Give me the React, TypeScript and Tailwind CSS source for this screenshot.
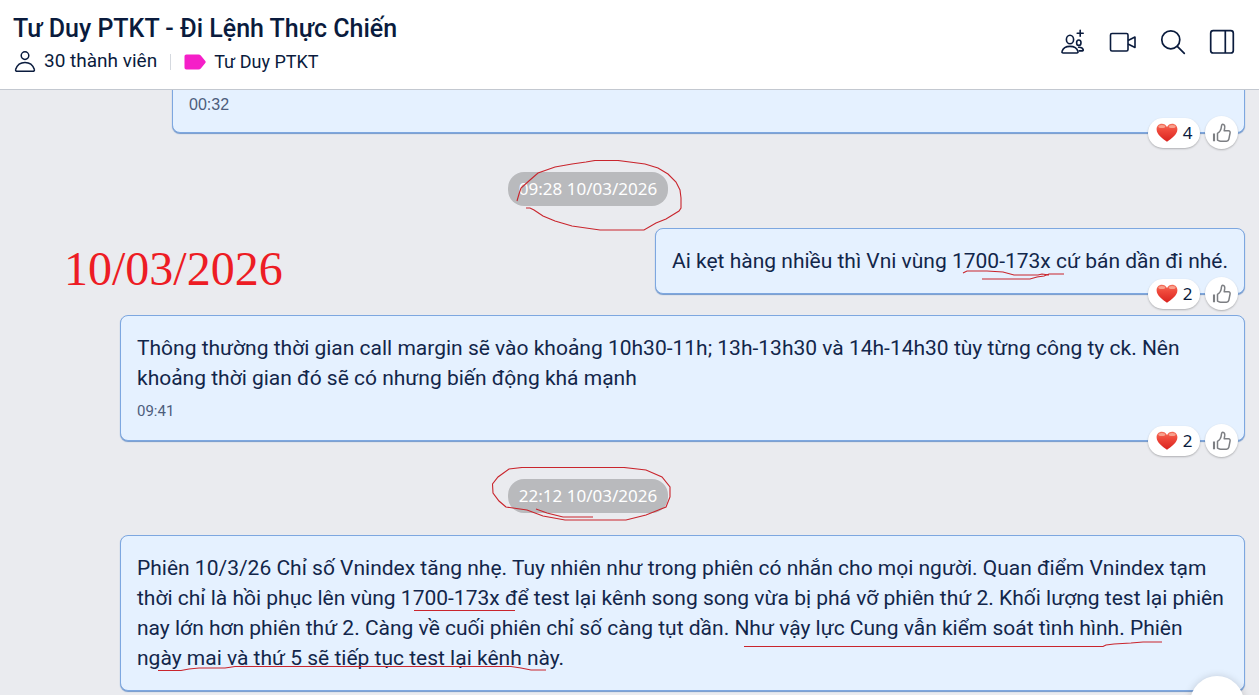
import type { ReactNode } from "react";

function Stroke({ d, className, width, height }: { d: string; className: string; width: number; height: number }) {
  return (
    <svg
      aria-hidden="true"
      className={`pointer-events-none absolute z-10 ${className}`}
      width={width}
      height={height}
      viewBox={`0 0 ${width} ${height}`}
      fill="none"
      stroke="#c9252d"
      strokeWidth="1.1"
    >
      <path d={d} />
    </svg>
  );
}

function MembersIcon() {
  return (
    <svg width="22" height="22" viewBox="0 0 22 22" fill="none" stroke="#0a1b3d" strokeWidth="1.5" aria-hidden="true">
      <circle cx="11" cy="4.600" r="3.800" />
      <path d="M3.2 20.3h15.6c1.3 0 1.9-.9 1.5-2C19 14.300 15.500 11.400 11 11.400S3 14.300 1.700 18.300c-.4 1.100.2 2 1.500 2Z" />
    </svg>
  );
}

function AddMemberIcon() {
  return (
    <svg width="26" height="26" viewBox="0 0 26 26" fill="none" stroke="#0a1b3d" strokeWidth="1.6" strokeLinecap="round" strokeLinejoin="round" aria-hidden="true">
      <ellipse cx="10" cy="10.500" rx="3.600" ry="4.300" />
      <path d="M3.200 24h13.600c1 0 1.500-.7 1.200-1.600-.9-3-4-5-8-5s-7.100 2-8 5c-.3.900.2 1.600 1.200 1.600Z" />
      <path d="M20.200 1.200v6M17.200 4.200h6" />
      <ellipse cx="18.800" cy="13.700" rx="2.200" ry="2.700" />
      <path d="M18.600 18.200c2.500-.1 4.200 1 4.600 2.500.2.700-.2 1.200-.8 1.200h-3.200" />
    </svg>
  );
}

function VideoIcon() {
  return (
    <svg width="28" height="22" viewBox="0 0 28 22" fill="none" stroke="#0a1b3d" strokeWidth="1.600" strokeLinejoin="round" aria-hidden="true">
      <rect x="1.500" y="2.500" width="17.500" height="17.500" rx="1.500" />
      <path d="m19 9.500 7-3.500v10.500l-7-3.500" />
    </svg>
  );
}

function SearchIcon() {
  return (
    <svg width="26" height="26" viewBox="0 0 26 26" fill="none" stroke="#0a1b3d" strokeWidth="1.700" strokeLinecap="round" aria-hidden="true">
      <circle cx="10.800" cy="10.800" r="9" />
      <path d="m17.300 17.300 7 7" />
    </svg>
  );
}

function PanelIcon() {
  return (
    <svg width="26" height="26" viewBox="0 0 26 26" fill="none" stroke="#0a1b3d" strokeWidth="1.700" aria-hidden="true">
      <rect x="1.700" y="1.700" width="22.600" height="22.300" rx="2.500" />
      <path d="M16.300 2v22" />
    </svg>
  );
}

function HeartIcon() {
  return (
    <svg width="22" height="19" viewBox="0 0 22 19" aria-hidden="true">
      <defs>
        <linearGradient id="heart" x1="0" y1="0" x2="0" y2="1">
          <stop offset="0" stopColor="#f4705c" />
          <stop offset=".35" stopColor="#f04a3c" />
          <stop offset="1" stopColor="#d9231f" />
        </linearGradient>
      </defs>
      <path fill="url(#heart)" d="M11 18.700C6.500 15.500.6 11.500.6 6.200.6 3 3 .8 5.800.8c2.300 0 4.200 1.200 5.200 3.300C12 2 13.900.8 16.200.8c2.800 0 5.200 2.200 5.200 5.400 0 5.300-5.900 9.300-10.400 12.500Z" />
      <ellipse cx="5.800" cy="3.500" rx="3.400" ry="1.600" fill="#f9b09c" opacity=".8" />
      <ellipse cx="16.200" cy="3.500" rx="3.400" ry="1.600" fill="#f9b09c" opacity=".8" />
    </svg>
  );
}

function LikeIcon() {
  return (
    <svg width="20" height="20" viewBox="0 0 20 20" fill="none" stroke="#7d7f83" strokeWidth="1.500" strokeLinejoin="round" aria-hidden="true">
      <path d="M2.300 10.500v7.700M1.700 10.500v7.700" />
      <path d="M5.500 10.300c2-1.200 3.400-3 3.700-5.300.1-1.500.2-3.700 1.600-3.700 1.700 0 2.100 1.800 1.900 3.400l-.5 3.100h4.300c1.200 0 1.800.9 1.600 2l-1.300 6.500c-.3 1.200-1 1.900-2.300 1.900H8.700c-1.300 0-2.100-.6-3.200-1.200Z" />
    </svg>
  );
}

function Reactions({ count }: { count: number }) {
  return (
    <div className="absolute right-1.5 -bottom-[17px] z-20 flex items-center gap-[5px]">
      <button type="button" className="flex h-[30px] w-[52px] items-center justify-center gap-[5px] rounded-full bg-white font-['Noto_Sans',sans-serif] text-[17px] text-[#0a1b3d] shadow-[0_1px_2px_#00000040]">
        <HeartIcon />
        <span>{count}</span>
      </button>
      <button type="button" aria-label="Thích" className="flex size-[33px] items-center justify-center rounded-full bg-white shadow-[0_1px_2px_#00000040]">
        <LikeIcon />
      </button>
    </div>
  );
}

function Bubble({ children, className, reactions }: { children: ReactNode; className: string; reactions?: number }) {
  return (
    <article className={`relative rounded-lg border border-[#7da7e0] bg-[#e5f1ff] px-4 py-[17px] font-['Roboto',sans-serif] text-[21px] leading-[30px] text-[#12264a] shadow-[0_1px_1px_#7398cb] ${className}`}>
      {children}
      {reactions !== undefined && <Reactions count={reactions} />}
    </article>
  );
}

function DatePill({ children, stroke }: { children: string; stroke: ReactNode }) {
  return (
    <div className="-ml-[120px] flex justify-center pr-[69px]">
      <div className="relative">
        <time className="flex h-[34px] w-40 items-center justify-center rounded-2xl bg-[#b9babd] font-['Noto_Sans',sans-serif] text-[17px] text-white">{children}</time>
        {stroke}
      </div>
    </div>
  );
}

export default function App() {
  return (
    <div className="flex h-screen flex-col overflow-hidden bg-[#eaebef]">
      <header className="flex h-[90px] shrink-0 items-center justify-between border-b border-[#c3c8d0] bg-white pr-6 pl-[13px]">
        <div className="font-['Roboto',sans-serif] text-[#0a1b3d]">
          <h1 className="text-[25px] leading-[34px] font-medium">Tư Duy PTKT - Đi Lệnh Thực Chiến</h1>
          <div className="flex h-8 items-center text-[19px]">
            <button type="button" className="flex items-center gap-2 pl-px">
              <MembersIcon />
              <span>30 thành viên</span>
            </button>
            <span className="mx-[13px] h-4 w-px bg-[#d5d9df]" />
            <button type="button" className="flex items-center gap-2">
              <svg width="22" height="16" viewBox="0 0 22 16" aria-hidden="true">
                <path fill="#f51fc8" d="M2.500.5h12c1 0 1.700.3 2.300 1l4.500 5.500c.5.600.5 1.400 0 2l-4.500 5.500c-.6.700-1.300 1-2.300 1h-12c-1.300 0-2-.7-2-2v-11c0-1.300.7-2 2-2Z" />
              </svg>
              <span className="text-[18px]">Tư Duy PTKT</span>
            </button>
          </div>
        </div>
        <nav className="flex items-center gap-[23px] pb-1.5">
          <button type="button" aria-label="Thêm thành viên"><AddMemberIcon /></button>
          <button type="button" aria-label="Gọi video"><VideoIcon /></button>
          <button type="button" aria-label="Tìm kiếm"><SearchIcon /></button>
          <button type="button" aria-label="Thông tin hội thoại"><PanelIcon /></button>
        </nav>
      </header>

      <main className="relative flex min-h-0 flex-1 flex-col overflow-hidden pr-3.5 pl-[120px] *:shrink-0">
        <Bubble className="-mt-3 ml-[52px] h-[55px]" reactions={4}>
          <time className="block font-['Liberation_Sans',sans-serif] text-[16px] leading-[18px] text-[#4d5d7c]">00:32</time>
        </Bubble>

        <p className="absolute top-[155px] left-16 font-['Liberation_Serif',serif] text-[48px] leading-[48px] text-[#ed1c24]">10/03/2026</p>

        <div className="mt-[39px]">
          <DatePill stroke={<Stroke className="-top-3 left-2" width={168} height={72} d="M1 41L3 34L5 28L14 20L22 13L39 7L56 4L70 2L79 .500H102L129 4L142 8L152 14L160 22L164 30L165 38V48L163 51L150 59L140 63L128 70H84L56 66L39 61L27 56L18 50L14 48H10" />}>
            09:28 10/03/2026
          </DatePill>
        </div>

        <Bubble className="mt-[22px] h-[66px] self-end" reactions={2}>
          <p>Ai kẹt hàng nhiều thì Vni vùng 1700-173x cứ bán dần đi nhé.</p>
          <Stroke className="top-9 right-44" width={106} height={16} d="M1 8L5 6H25L41 7L52 10H76L80 9L87 10M20 14H68L75 12L82 11L87 9H102" />
        </Bubble>

        <Bubble className="mt-[21px]" reactions={2}>
          <p>Thông thường thời gian call margin sẽ vào khoảng 10h30-11h; 13h-13h30 và 14h-14h30 tùy từng công ty ck. Nên khoảng thời gian đó sẽ có nhưng biến động khá mạnh</p>
          <time className="mt-1.5 block text-[15px] leading-6 text-[#4d5d7c]">09:41</time>
        </Bubble>

        <div className="mt-[38px]">
          <DatePill stroke={<Stroke className="-top-3 -left-4" width={182} height={56} d="M14 40L7 34L1 26L.5 17L6 10L17 2L30 .5H132L154 3L170 10L178 20L178 30L174 40L164 44L154 48L134 53H73L51 49L35 43L14 40M44 42L55 46L71 50H101" />}>
            22:12 10/03/2026
          </DatePill>
        </div>

        <Bubble className="mt-[22px]">
          <p>Phiên 10/3/26 Chỉ số Vnindex tăng nhẹ. Tuy nhiên như trong phiên có nhắn cho mọi người. Quan điểm Vnindex tạm thời chỉ là hồi phục lên vùng 1700-173x để test lại kênh song song vừa bị phá vỡ phiên thứ 2. Khối lượng test lại phiên nay lớn hơn phiên thứ 2. Càng về cuối phiên chỉ số càng tụt dần. Như vậy lực Cung vẫn kiểm soát tình hình. Phiên ngày mai và thứ 5 sẽ tiếp tục test lại kênh này.</p>
          <Stroke className="top-0 left-0" width={1060} height={150} d="M293 74.500H394M623 110.500H982L985 109L993 108L1010 107L1022 106H1041M37 134.500H60L68 133L78 132H104L114 130.500H390L400 132L410 134H425" />
        </Bubble>

        <button type="button" aria-label="Cuộn xuống" className="absolute right-[15px] -bottom-[35px] z-20 size-[54px] rounded-full bg-white shadow-[0_1px_8px_#00000030]" />
      </main>
    </div>
  );
}
